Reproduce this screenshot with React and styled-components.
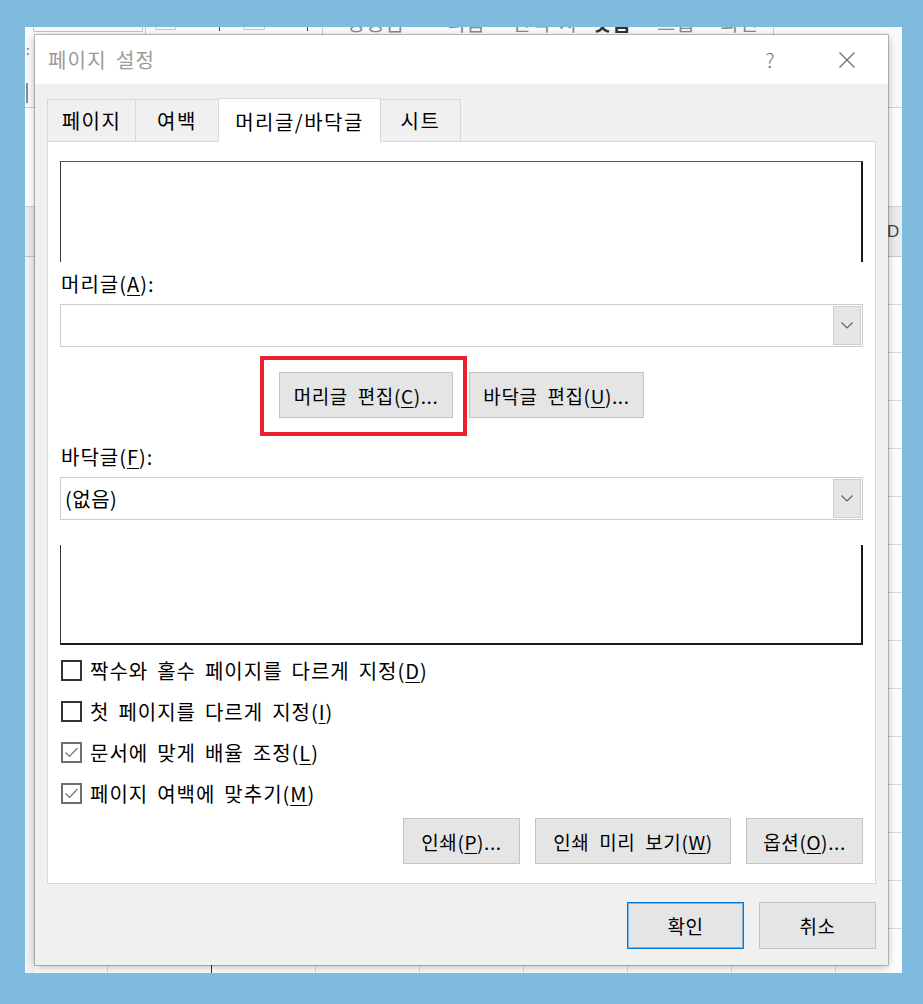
import React from 'react';
import styled, { createGlobalStyle } from 'styled-components';

const FONT = `"Noto Sans CJK KR", "Noto Sans", sans-serif`;

const GlobalStyle = createGlobalStyle`
  html, body { margin: 0; padding: 0; background: #7fbbdf; }
  body { font-family: ${FONT}; }
  * { box-sizing: border-box; }
`;

const Page = styled.div`
  width: 923px;
  height: 1004px;
  padding: 27px 21px 31px 25px;
  background: #7fbbdf;
`;

/* ---------- Excel window behind the dialog ---------- */
const ExcelFrame = styled.div`
  position: relative;
  width: 877px;
  height: 946px;
  overflow: hidden;
  background: #fff;
  display: flex;
  flex-direction: column;
`;

const RibbonStrip = styled.div`
  height: 8px;
  flex: none;
  overflow: hidden;
  background: #fbfbfb;
  display: flex;
  align-items: flex-start;
`;

const RibbonCell = styled.div`
  flex: none;
  width: ${(p) => p.$w}px;
  height: 8px;
  overflow: hidden;
  display: flex;
  align-items: flex-start;
`;

const RibbonBox = styled.div`
  width: ${(p) => p.$w}px;
  height: ${(p) => p.$h}px;
  border: 1px solid #c4c4c4;
  border-top: none;
  border-radius: 0 0 2px 2px;
`;

const RibbonLine = styled.div`
  width: 1px;
  height: ${(p) => p.$h}px;
  background: ${(p) => (p.$dark ? '#444' : '#d0d0d0')};
`;

const RibbonText = styled.span`
  margin-top: -15px;
  font-size: 20px;
  line-height: 22px;
  white-space: nowrap;
  letter-spacing: 1px;
  word-spacing: 3px;
  color: ${(p) => (p.$strong ? '#333' : '#8a8a8a')};
  font-weight: ${(p) => (p.$strong ? 700 : 400)};
`;

const FormulaArea = styled.div`
  height: 73px;
  flex: none;
  background: #fafafa;
  border-bottom: 1px solid #d4d4d4;
  display: flex;
  flex-direction: column;
  padding-left: 1px;
`;

const FormulaColon = styled.span`
  margin-top: 8px;
  font-size: 13px;
  line-height: 14px;
  color: #666;
`;

const FormulaBar = styled.div`
  margin-top: 26px;
  width: 2px;
  height: 20px;
  background: #8a8a8a;
`;

const ToolArea = styled.div`
  height: 98px;
  flex: none;
  background: #fff;
`;

const ColHeader = styled.div`
  height: 51px;
  flex: none;
  display: flex;
  background: #ececec;
  border-top: 1px solid #d4d4d4;
  border-bottom: 1px solid #c8c8c8;
`;

const RowHeadCorner = styled.div`
  width: 83px;
  flex: none;
  border-right: 1px solid #d0d0d0;
`;

const ColCell = styled.div`
  width: 104px;
  flex: none;
  display: flex;
  align-items: center;
  justify-content: center;
  border-right: 1px solid #d0d0d0;
  font-family: "Liberation Sans", sans-serif;
  font-size: 17px;
  color: #444;
`;

const Grid = styled.div`
  flex: 1;
  background:
    linear-gradient(#333, #333) 186px 0 / 1px 100% no-repeat,
    linear-gradient(#f2f2f2, #f2f2f2) 0 0 / 10px 100% no-repeat,
    repeating-linear-gradient(to right, transparent 0 82px, #dadada 82px 83px, transparent 83px 104px),
    repeating-linear-gradient(to bottom, transparent 0 47px, #dadada 47px 48px),
    #fff;
`;

/* ---------- Dialog ---------- */
const Dialog = styled.div`
  position: absolute;
  left: 10px;
  top: 8px;
  width: 853px;
  height: 930px;
  display: flex;
  flex-direction: column;
  background: #f0f0f0;
  box-shadow: 0 0 0 1px rgba(0, 0, 0, 0.22), 0 2px 9px rgba(0, 0, 0, 0.28);
  color: #000;
  font-size: 20px;
  letter-spacing: 1px;
  word-spacing: 3.5px;
`;

const TitleBar = styled.div`
  height: 49px;
  flex: none;
  background: #fff;
  display: flex;
  align-items: center;
  padding: 0 33px 0 13px;
`;

const Title = styled.div`
  flex: 1;
  color: #9a9a9a;
  font-size: 20px;
  letter-spacing: 1.2px;
`;

const HelpGlyph = styled.span`
  width: 20px;
  text-align: center;
  color: #6e6e6e;
  font-size: 20px;
  font-weight: 300;
  letter-spacing: 0;
  margin-right: 59px;
`;

const CloseGlyph = styled.svg`
  width: 16px;
  height: 16px;
  display: block;
`;

const Body = styled.div`
  flex: 1;
  display: flex;
  flex-direction: column;
  padding: 14px 12px 16px;
`;

const TabRow = styled.div`
  height: 44px;
  flex: none;
  display: flex;
  align-items: flex-end;
  margin-bottom: -1px;
  position: relative;
  z-index: 1;
`;

const Tab = styled.div`
  width: ${(p) => p.$w}px;
  height: ${(p) => (p.$active ? 44 : 43)}px;
  margin-left: -1px;
  display: flex;
  align-items: center;
  justify-content: center;
  padding-top: ${(p) => (p.$active ? 1 : 0)}px;
  letter-spacing: 1.5px;
  background: ${(p) => (p.$active ? '#fff' : '#f0f0f0')};
  border: 1px solid #d9d9d9;
  border-bottom: ${(p) => (p.$active ? 'none' : '1px solid #d9d9d9')};
  position: relative;
  z-index: ${(p) => (p.$active ? 2 : 1)};
  &:first-child { margin-left: 0; }
`;

const Panel = styled.div`
  flex: none;
  background: #fff;
  border: 1px solid #d9d9d9;
  padding: 19px 12px;
  display: flex;
  flex-direction: column;
`;

const HeaderPreview = styled.div`
  height: 101px;
  border-top: 1px solid #555;
  border-left: 1px solid #333;
  border-right: 2px solid #1a1a1a;
`;

const FooterPreview = styled.div`
  height: 100px;
  margin-top: 25px;
  border-left: 1px solid #333;
  border-right: 2px solid #1a1a1a;
  border-bottom: 2px solid #1a1a1a;
`;

const FieldLabel = styled.div`
  margin-top: ${(p) => p.$mt}px;
  height: 24px;
  line-height: 24px;
  padding-left: 1px;
`;

const U = styled.u`
  text-decoration: underline;
  text-underline-offset: 3px;
  text-decoration-thickness: 1px;
`;

const Combo = styled.div`
  margin-top: 8px;
  height: 43px;
  display: flex;
  align-items: center;
  border: 1px solid #cccccc;
  background: #fff;
`;

const ComboText = styled.div`
  flex: 1;
  padding-left: 4px;
  line-height: 24px;
  letter-spacing: 0.5px;
`;

const DropButton = styled.div`
  width: 28px;
  height: 39px;
  margin-right: 1px;
  display: flex;
  align-items: center;
  justify-content: center;
  background: #e6e6e6;
  border: 1px solid #cfcfcf;
`;

const ButtonRow = styled.div`
  margin-top: ${(p) => p.$mt}px;
  display: flex;
  justify-content: ${(p) => p.$justify || 'center'};
  gap: ${(p) => p.$gap}px;
`;

const Button = styled.div`
  width: ${(p) => p.$w}px;
  height: ${(p) => p.$h || 46}px;
  flex: none;
  display: flex;
  align-items: center;
  justify-content: center;
  font-size: 19px;
  letter-spacing: 0.6px;
  word-spacing: 5px;
  background: #e5e5e5;
  border: 1px solid ${(p) => (p.$primary ? '#0078d7' : '#c4c4c4')};
  box-shadow: ${(p) => (p.$primary ? 'inset 0 0 0 1px rgba(0,120,215,0.45)' : 'none')};
  white-space: nowrap;
`;

const Highlight = styled.div`
  position: relative;
`;

const Annotation = styled.div`
  position: absolute;
  left: -19px;
  right: -14px;
  top: -16px;
  bottom: -18px;
  border: 4px solid #e8202f;
  pointer-events: none;
`;

const CheckList = styled.div`
  margin-top: 5px;
  display: flex;
  flex-direction: column;
`;

const CheckRow = styled.div`
  height: 41px;
  display: flex;
  align-items: center;
  gap: 8px;
  padding-left: 1px;
`;

const Box = styled.div`
  width: 21px;
  height: 21px;
  flex: none;
  border: 2px solid ${(p) => (p.$checked ? '#6f6f6f' : '#333')};
  display: flex;
  align-items: center;
  justify-content: center;
  background: #fff;
`;

const Footer = styled.div`
  margin-top: 18px;
  display: flex;
  justify-content: flex-end;
  gap: 15px;
`;

const Chevron = () => (
  <svg width="12" height="7" viewBox="0 0 12 7">
    <polyline points="0.5,0.5 6,6 11.5,0.5" fill="none" stroke="#606060" strokeWidth="1.1" />
  </svg>
);

const Check = () => (
  <svg width="17" height="17" viewBox="0 0 17 17">
    <polyline points="2.5,8.5 6.5,12.5 14.5,4" fill="none" stroke="#707070" strokeWidth="1.2" />
  </svg>
);

const Checkbox = ({ checked, children }) => (
  <CheckRow>
    <Box $checked={checked}>{checked && <Check />}</Box>
    <span>{children}</span>
  </CheckRow>
);

const ribbonTexts = [
  { w: 100, t: '양공금' },
  { w: 65, t: '리급' },
  { w: 81, t: '선택 자' },
  { w: 64, t: '맞춤', strong: true },
  { w: 63, t: '그룹' },
  { w: 53, t: '회전' },
];

const columns = ['W', 'X', 'Y', 'Z', 'AA', 'AB', 'AC', 'AD'];

export default function App() {
  return (
    <>
      <GlobalStyle />
      <Page>
        <ExcelFrame>
          <RibbonStrip>
            <RibbonCell $w={8} />
            <RibbonCell $w={112}><RibbonBox $w={110} $h={5} /></RibbonCell>
            <RibbonCell $w={10}><RibbonLine $h={8} /></RibbonCell>
            <RibbonCell $w={64}><RibbonBox $w={21} $h={3} /></RibbonCell>
            <RibbonCell $w={24}><RibbonLine $h={4} $dark /></RibbonCell>
            <RibbonCell $w={64}><RibbonBox $w={22} $h={3} /></RibbonCell>
            <RibbonCell $w={15}><RibbonLine $h={4} $dark /></RibbonCell>
            <RibbonCell $w={25}><RibbonLine $h={8} /></RibbonCell>
            {ribbonTexts.map((r) => (
              <RibbonCell key={r.t} $w={r.w}>
                <RibbonText $strong={r.strong}>{r.t}</RibbonText>
              </RibbonCell>
            ))}
            <RibbonCell $w={10}><RibbonLine $h={8} /></RibbonCell>
          </RibbonStrip>
          <FormulaArea>
            <FormulaColon>:</FormulaColon>
            <FormulaBar />
          </FormulaArea>
          <ToolArea />
          <ColHeader>
            <RowHeadCorner />
            {columns.map((c) => (
              <ColCell key={c}>{c}</ColCell>
            ))}
          </ColHeader>
          <Grid />

          <Dialog>
            <TitleBar>
              <Title>페이지 설정</Title>
              <HelpGlyph>?</HelpGlyph>
              <CloseGlyph viewBox="0 0 16 16">
                <line x1="0.5" y1="0.5" x2="15.5" y2="15.5" stroke="#666" strokeWidth="1.1" />
                <line x1="15.5" y1="0.5" x2="0.5" y2="15.5" stroke="#666" strokeWidth="1.1" />
              </CloseGlyph>
            </TitleBar>
            <Body>
              <TabRow>
                <Tab $w={89}>페이지</Tab>
                <Tab $w={84}>여백</Tab>
                <Tab $w={163} $active>머리글/바닥글</Tab>
                <Tab $w={81}>시트</Tab>
              </TabRow>
              <Panel>
                <HeaderPreview />
                <FieldLabel $mt={10}>머리글(<U>A</U>):</FieldLabel>
                <Combo>
                  <ComboText />
                  <DropButton><Chevron /></DropButton>
                </Combo>
                <ButtonRow $mt={25} $gap={16}>
                  <Highlight>
                    <Button $w={174}>머리글 편집(<U>C</U>)...</Button>
                    <Annotation />
                  </Highlight>
                  <Button $w={175}>바닥글 편집(<U>U</U>)...</Button>
                </ButtonRow>
                <FieldLabel $mt={27}>바닥글(<U>F</U>):</FieldLabel>
                <Combo>
                  <ComboText>(없음)</ComboText>
                  <DropButton><Chevron /></DropButton>
                </Combo>
                <FooterPreview />
                <CheckList>
                  <Checkbox>짝수와 홀수 페이지를 다르게 지정(<U>D</U>)</Checkbox>
                  <Checkbox>첫 페이지를 다르게 지정(<U>I</U>)</Checkbox>
                  <Checkbox checked>문서에 맞게 배율 조정(<U>L</U>)</Checkbox>
                  <Checkbox checked>페이지 여백에 맞추기(<U>M</U>)</Checkbox>
                </CheckList>
                <ButtonRow $mt={4} $gap={15} $justify="flex-end">
                  <Button $w={117}>인쇄(<U>P</U>)...</Button>
                  <Button $w={196}>인쇄 미리 보기(<U>W</U>)</Button>
                  <Button $w={117}>옵션(<U>O</U>)...</Button>
                </ButtonRow>
              </Panel>
              <Footer>
                <Button $w={117} $h={47} $primary>확인</Button>
                <Button $w={117} $h={47}>취소</Button>
              </Footer>
            </Body>
          </Dialog>
        </ExcelFrame>
      </Page>
    </>
  );
}
